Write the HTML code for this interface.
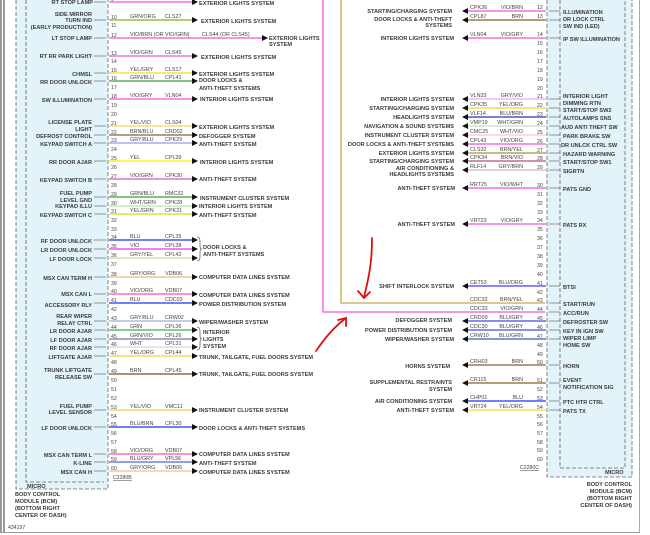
<!DOCTYPE html>
<html><head><meta charset="utf-8"><style>
html,body{margin:0;padding:0;background:#fff;width:650px;height:535px;overflow:hidden}
svg{display:block}
text{font-family:"Liberation Sans",sans-serif;font-size:5.6px;font-weight:bold;fill:#3a3a3a}
.e{text-anchor:end}
.n{font-size:5.2px;font-weight:normal;fill:#444}
.c{font-size:5.4px;font-weight:normal;fill:#444}
</style></head><body>
<svg width="650" height="535" viewBox="0 0 650 535" xmlns="http://www.w3.org/2000/svg">
<!-- borders -->
<line x1="1" y1="0" x2="1" y2="533" stroke="#333" stroke-width="1"/>
<line x1="4" y1="0" x2="4" y2="533" stroke="#333" stroke-width="1"/>
<line x1="1" y1="532.5" x2="640" y2="532.5" stroke="#999" stroke-width="1"/>
<line x1="639.5" y1="0" x2="639.5" y2="533" stroke="#aaa" stroke-width="1"/>
<!-- left module -->
<rect x="16" y="0" width="92" height="489" fill="#e3f3fa"/>
<path d="M16 0V489H108V0" fill="none" stroke="#666" stroke-width="0.8" stroke-dasharray="4,2"/>
<path d="M26 0V482H104" fill="none" stroke="#666" stroke-width="0.8" stroke-dasharray="4,2"/>
<text x="27" y="488">MICRO</text>
<text x="15" y="496">BODY CONTROL</text>
<text x="15" y="503">MODULE (BCM)</text>
<text x="15" y="510">(BOTTOM RIGHT</text>
<text x="15" y="517">CENTER OF DASH)</text>
<text x="8" y="529" class="n">434197</text>
<!-- right module -->
<rect x="547" y="0" width="85" height="477" fill="#e3f3fa"/>
<path d="M547 0V477H632V0" fill="none" stroke="#666" stroke-width="0.8" stroke-dasharray="4,2"/>
<path d="M560 0V468H625V0" fill="none" stroke="#666" stroke-width="0.8" stroke-dasharray="4,2"/>
<text x="605" y="474">MICRO</text>
<text x="632" y="486" class="e">BODY CONTROL</text>
<text x="632" y="493" class="e">MODULE (BCM)</text>
<text x="632" y="500" class="e">(BOTTOM RIGHT</text>
<text x="632" y="507" class="e">CENTER OF DASH)</text>
<!-- loop lines -->
<path d="M323 0V312H545" fill="none" stroke="#f050e0" stroke-width="1.3"/>
<path d="M341 0V303H545" fill="none" stroke="#c8a850" stroke-width="1.3"/>
<!-- red arrows -->
<g stroke="#e01010" stroke-width="1.8" fill="none" stroke-linecap="round">
<path d="M372 238C372 255 371 270 364 297"/><path d="M358 291L364 298L370 292"/>
<path d="M316 351C325 338 333 328 346 318"/><path d="M338 320L346 318L346 326"/>
</g>
<!-- left pin numbers -->
<g class="n">
<text x="111" y="1" class="n">9</text><text x="111" y="19" class="n">10</text><text x="111" y="27" class="n">11</text><text x="111" y="37" class="n">12</text><text x="111" y="55" class="n">13</text><text x="111" y="63" class="n">14</text><text x="111" y="72" class="n">15</text><text x="111" y="80" class="n">16</text><text x="111" y="89" class="n">17</text><text x="111" y="98" class="n">18</text><text x="111" y="107" class="n">19</text><text x="111" y="116" class="n">20</text><text x="111" y="125" class="n">21</text><text x="111" y="134" class="n">22</text><text x="111" y="142" class="n">23</text><text x="111" y="151" class="n">24</text><text x="111" y="160" class="n">25</text><text x="111" y="169" class="n">26</text><text x="111" y="178" class="n">27</text><text x="111" y="187" class="n">28</text><text x="111" y="196" class="n">29</text><text x="111" y="205" class="n">30</text><text x="111" y="213" class="n">31</text><text x="111" y="222" class="n">32</text><text x="111" y="231" class="n">33</text><text x="111" y="239" class="n">34</text><text x="111" y="248" class="n">35</text><text x="111" y="257" class="n">36</text><text x="111" y="266" class="n">37</text><text x="111" y="276" class="n">38</text><text x="111" y="285" class="n">39</text><text x="111" y="293" class="n">40</text><text x="111" y="302" class="n">41</text><text x="111" y="311" class="n">42</text><text x="111" y="320" class="n">43</text><text x="111" y="329" class="n">44</text><text x="111" y="338" class="n">45</text><text x="111" y="346" class="n">46</text><text x="111" y="355" class="n">47</text><text x="111" y="364" class="n">48</text><text x="111" y="373" class="n">49</text><text x="111" y="382" class="n">50</text><text x="111" y="391" class="n">51</text><text x="111" y="400" class="n">52</text><text x="111" y="409" class="n">53</text><text x="111" y="418" class="n">54</text><text x="111" y="426" class="n">55</text><text x="111" y="435" class="n">56</text><text x="111" y="444" class="n">57</text><text x="111" y="453" class="n">58</text><text x="111" y="461" class="n">59</text><text x="111" y="470" class="n">60</text>
</g>
<text x="113" y="479" class="n" text-decoration="underline">C2280B</text>
<!-- left wires -->
<g stroke-width="1.3">
<line x1="109" y1="2" x2="193" y2="2" stroke="#f050e0"/>
<line x1="109" y1="20" x2="193" y2="20" stroke="#78b020"/>
<line x1="109" y1="38" x2="263" y2="38" stroke="#f050e0"/>
<line x1="109" y1="56" x2="193" y2="56" stroke="#f050e0"/>
<line x1="109" y1="73" x2="193" y2="73" stroke="#e8e020"/>
<line x1="109" y1="81" x2="193" y2="81" stroke="#3a9a40"/>
<line x1="109" y1="99" x2="193" y2="99" stroke="#f050e0"/>
<line x1="109" y1="126" x2="193" y2="126" stroke="#f5d060"/>
<line x1="109" y1="135" x2="193" y2="135" stroke="#806050"/>
<line x1="109" y1="143" x2="193" y2="143" stroke="#9a9ae8"/>
<line x1="109" y1="161" x2="193" y2="161" stroke="#f0f000"/>
<line x1="109" y1="179" x2="193" y2="179" stroke="#e050d0"/>
<line x1="109" y1="197" x2="193" y2="197" stroke="#3a9a40"/>
<line x1="109" y1="206" x2="193" y2="206" stroke="#c0e0a0"/>
<line x1="109" y1="214" x2="193" y2="214" stroke="#d0e010"/>
<line x1="109" y1="240" x2="193" y2="240" stroke="#2030f0"/>
<line x1="109" y1="249" x2="193" y2="249" stroke="#f030e0"/>
<line x1="109" y1="258" x2="193" y2="258" stroke="#d8d0a8"/>
<line x1="109" y1="277" x2="193" y2="277" stroke="#e8b888"/>
<line x1="109" y1="294" x2="193" y2="294" stroke="#f050c0"/>
<line x1="109" y1="303" x2="193" y2="303" stroke="#2030f0"/>
<line x1="109" y1="321" x2="193" y2="321" stroke="#a8a8e8"/>
<line x1="109" y1="330" x2="193" y2="330" stroke="#40b040"/>
<line x1="109" y1="339" x2="193" y2="339" stroke="#8a6aa0"/>
<line x1="109" y1="347" x2="193" y2="347" stroke="#d8d8d8"/>
<line x1="109" y1="356" x2="193" y2="356" stroke="#f0d830"/>
<line x1="109" y1="374" x2="193" y2="374" stroke="#7a5020"/>
<line x1="109" y1="410" x2="193" y2="410" stroke="#f5c850"/>
<line x1="109" y1="427" x2="193" y2="427" stroke="#2030e0"/>
<line x1="109" y1="454" x2="193" y2="454" stroke="#f050c0"/>
<line x1="109" y1="462" x2="193" y2="462" stroke="#5060f0"/>
<line x1="109" y1="471" x2="193" y2="471" stroke="#e8c0a0"/>
</g>
<!-- left arrows -->
<g fill="#111">
<path d="M192 -1L198 2L192 5Z"/><path d="M192 17L198 20L192 23Z"/><path d="M262 35L268 38L262 41Z"/><path d="M192 53L198 56L192 59Z"/><path d="M192 70L198 73L192 76Z"/><path d="M192 78L198 81L192 84Z"/><path d="M192 96L198 99L192 102Z"/><path d="M192 123L198 126L192 129Z"/><path d="M192 132L198 135L192 138Z"/><path d="M192 140L198 143L192 146Z"/><path d="M192 158L198 161L192 164Z"/><path d="M192 176L198 179L192 182Z"/><path d="M192 194L198 197L192 200Z"/><path d="M192 203L198 206L192 209Z"/><path d="M192 211L198 214L192 217Z"/><path d="M192 237L198 240L192 243Z"/><path d="M192 246L198 249L192 252Z"/><path d="M192 255L198 258L192 261Z"/><path d="M192 274L198 277L192 280Z"/><path d="M192 291L198 294L192 297Z"/><path d="M192 300L198 303L192 306Z"/><path d="M192 318L198 321L192 324Z"/><path d="M192 327L198 330L192 333Z"/><path d="M192 336L198 339L192 342Z"/><path d="M192 344L198 347L192 350Z"/><path d="M192 353L198 356L192 359Z"/><path d="M192 371L198 374L192 377Z"/><path d="M192 407L198 410L192 413Z"/><path d="M192 424L198 427L192 430Z"/><path d="M192 451L198 454L192 457Z"/><path d="M192 459L198 462L192 465Z"/><path d="M192 468L198 471L192 474Z"/>
</g>
<path d="M197 237Q200 237 200 241V246Q200 249 202 249Q200 249 200 252V257Q200 261 197 261" fill="none" stroke="#333" stroke-width="0.6"/>
<path d="M197 327Q200 327 200 331V336Q200 339 202 339Q200 339 200 342V346Q200 350 197 350" fill="none" stroke="#333" stroke-width="0.6"/>
<!-- left wire labels -->
<g class="c">
<text x="130" y="0" class="c">VIO/BRN</text><text x="165" y="0" class="c">CLS45</text>
<text x="130" y="18" class="c">GRN/ORG</text><text x="165" y="18" class="c">CLS27</text>
<text x="130" y="36" class="c">VIO/BRN (OR VIO/GRN)</text><text x="202" y="36" class="c">CLS44 (OR CLS45)</text>
<text x="130" y="54" class="c">VIO/GRN</text><text x="165" y="54" class="c">CLS45</text>
<text x="130" y="71" class="c">YEL/GRY</text><text x="165" y="71" class="c">CLS17</text>
<text x="130" y="79" class="c">GRN/BLU</text><text x="165" y="79" class="c">CPL41</text>
<text x="130" y="97" class="c">VIO/GRY</text><text x="165" y="97" class="c">VLN04</text>
<text x="130" y="124" class="c">YEL/VIO</text><text x="165" y="124" class="c">CLS04</text>
<text x="130" y="133" class="c">BRN/BLU</text><text x="165" y="133" class="c">CRD02</text>
<text x="130" y="141" class="c">GRY/BLU</text><text x="165" y="141" class="c">CPK29</text>
<text x="130" y="159" class="c">YEL</text><text x="165" y="159" class="c">CPL39</text>
<text x="130" y="177" class="c">VIO/GRN</text><text x="165" y="177" class="c">CPK30</text>
<text x="130" y="195" class="c">GRN/BLU</text><text x="165" y="195" class="c">RMC32</text>
<text x="130" y="204" class="c">WHT/GRN</text><text x="165" y="204" class="c">CPK28</text>
<text x="130" y="212" class="c">YEL/GRN</text><text x="165" y="212" class="c">CPK31</text>
<text x="130" y="238" class="c">BLU</text><text x="165" y="238" class="c">CPL35</text>
<text x="130" y="247" class="c">VIO</text><text x="165" y="247" class="c">CPL38</text>
<text x="130" y="256" class="c">GRY/YEL</text><text x="165" y="256" class="c">CPL42</text>
<text x="130" y="275" class="c">GRY/ORG</text><text x="165" y="275" class="c">VDB06</text>
<text x="130" y="292" class="c">VIO/ORG</text><text x="165" y="292" class="c">VDB07</text>
<text x="130" y="301" class="c">BLU</text><text x="165" y="301" class="c">CDC03</text>
<text x="130" y="319" class="c">GRY/BLU</text><text x="165" y="319" class="c">CRW02</text>
<text x="130" y="328" class="c">GRN</text><text x="165" y="328" class="c">CPL36</text>
<text x="130" y="337" class="c">GRN/VIO</text><text x="165" y="337" class="c">CPL26</text>
<text x="130" y="345" class="c">WHT</text><text x="165" y="345" class="c">CPL31</text>
<text x="130" y="354" class="c">YEL/ORG</text><text x="165" y="354" class="c">CPL44</text>
<text x="130" y="372" class="c">BRN</text><text x="165" y="372" class="c">CPL45</text>
<text x="130" y="408" class="c">YEL/VIO</text><text x="165" y="408" class="c">VMC11</text>
<text x="130" y="425" class="c">BLU/BRN</text><text x="165" y="425" class="c">CPL30</text>
<text x="130" y="452" class="c">VIO/ORG</text><text x="165" y="452" class="c">VDB07</text>
<text x="130" y="460" class="c">BLU/GRY</text><text x="165" y="460" class="c">VPL56</text>
<text x="130" y="469" class="c">GRY/ORG</text><text x="165" y="469" class="c">VDB06</text>
</g>
<!-- left destinations -->
<g>
<text x="199" y="5">EXTERIOR LIGHTS SYSTEM</text>
<text x="201" y="23">EXTERIOR LIGHTS SYSTEM</text>
<text x="269" y="40">EXTERIOR LIGHTS</text><text x="269" y="46">SYSTEM</text>
<text x="201" y="59">EXTERIOR LIGHTS SYSTEM</text>
<text x="199" y="76">EXTERIOR LIGHTS SYSTEM</text>
<text x="199" y="82">DOOR LOCKS &amp;</text><text x="199" y="90">ANTI-THEFT SYSTEMS</text>
<text x="200" y="101">INTERIOR LIGHTS SYSTEM</text>
<text x="199" y="129">EXTERIOR LIGHTS SYSTEM</text>
<text x="199" y="138">DEFOGGER SYSTEM</text>
<text x="199" y="146">ANTI-THEFT SYSTEM</text>
<text x="200" y="164">INTERIOR LIGHTS SYSTEM</text>
<text x="199" y="181">ANTI-THEFT SYSTEM</text>
<text x="200" y="200">INSTRUMENT CLUSTER SYSTEM</text>
<text x="199" y="208">INTERIOR LIGHTS SYSTEM</text>
<text x="199" y="217">ANTI-THEFT SYSTEM</text>
<text x="203" y="249">DOOR LOCKS &amp;</text><text x="203" y="256">ANTI-THEFT SYSTEMS</text>
<text x="199" y="279">COMPUTER DATA LINES SYSTEM</text>
<text x="199" y="297">COMPUTER DATA LINES SYSTEM</text>
<text x="199" y="306">POWER DISTRIBUTION SYSTEM</text>
<text x="199" y="324">WIPER/WASHER SYSTEM</text>
<text x="203" y="334">INTERIOR</text><text x="203" y="341">LIGHTS</text><text x="203" y="348">SYSTEM</text>
<text x="199" y="359">TRUNK, TAILGATE, FUEL DOORS SYSTEM</text>
<text x="199" y="376">TRUNK, TAILGATE, FUEL DOORS SYSTEM</text>
<text x="199" y="412">INSTRUMENT CLUSTER SYSTEM</text>
<text x="199" y="430">DOOR LOCKS &amp; ANTI-THEFT SYSTEMS</text>
<text x="199" y="456">COMPUTER DATA LINES SYSTEM</text>
<text x="199" y="465">ANTI-THEFT SYSTEM</text>
<text x="199" y="474">COMPUTER DATA LINES SYSTEM</text>
</g>
<!-- left module labels + stubs -->
<g stroke="#555" stroke-width="0.6">
<line x1="94" y1="2" x2="106" y2="2"/><line x1="94" y1="20" x2="106" y2="20"/><line x1="94" y1="38" x2="106" y2="38"/><line x1="94" y1="56" x2="106" y2="56"/><line x1="94" y1="73" x2="106" y2="73"/><line x1="94" y1="81" x2="106" y2="81"/><line x1="94" y1="99" x2="106" y2="99"/><line x1="94" y1="126" x2="106" y2="126"/><line x1="94" y1="135" x2="106" y2="135"/><line x1="94" y1="143" x2="106" y2="143"/><line x1="94" y1="161" x2="106" y2="161"/><line x1="94" y1="179" x2="106" y2="179"/><line x1="94" y1="197" x2="106" y2="197"/><line x1="94" y1="206" x2="106" y2="206"/><line x1="94" y1="214" x2="106" y2="214"/><line x1="94" y1="240" x2="106" y2="240"/><line x1="94" y1="249" x2="106" y2="249"/><line x1="94" y1="258" x2="106" y2="258"/><line x1="94" y1="277" x2="106" y2="277"/><line x1="94" y1="294" x2="106" y2="294"/><line x1="94" y1="303" x2="106" y2="303"/><line x1="94" y1="321" x2="106" y2="321"/><line x1="94" y1="330" x2="106" y2="330"/><line x1="94" y1="339" x2="106" y2="339"/><line x1="94" y1="347" x2="106" y2="347"/><line x1="94" y1="356" x2="106" y2="356"/><line x1="94" y1="374" x2="106" y2="374"/><line x1="94" y1="410" x2="106" y2="410"/><line x1="94" y1="427" x2="106" y2="427"/><line x1="94" y1="454" x2="106" y2="454"/><line x1="94" y1="462" x2="106" y2="462"/><line x1="94" y1="471" x2="106" y2="471"/>
</g>
<g>
<text x="93" y="4" class="e">RT STOP LAMP</text>
<text x="92" y="16" class="e">SIDE MIRROR</text><text x="92" y="22" class="e">TURN IND</text><text x="92" y="29" class="e">(EARLY PRODUCTION)</text>
<text x="92" y="40" class="e">LT STOP LAMP</text>
<text x="92" y="58" class="e">RT RR PARK LIGHT</text>
<text x="92" y="76" class="e">CHMSL</text>
<text x="92" y="84" class="e">RR DOOR UNLOCK</text>
<text x="92" y="102" class="e">SW ILLUMINATION</text>
<text x="92" y="124" class="e">LICENSE PLATE</text><text x="92" y="131" class="e">LIGHT</text>
<text x="92" y="138" class="e">DEFROST CONTROL</text>
<text x="92" y="146" class="e">KEYPAD SWITCH A</text>
<text x="92" y="164" class="e">RR DOOR AJAR</text>
<text x="92" y="182" class="e">KEYPAD SWITCH B</text>
<text x="92" y="195" class="e">FUEL PUMP</text><text x="92" y="202" class="e">LEVEL GND</text>
<text x="92" y="208" class="e">KEYPAD ILLU</text>
<text x="92" y="217" class="e">KEYPAD SWITCH C</text>
<text x="92" y="243" class="e">RF DOOR UNLOCK</text>
<text x="92" y="252" class="e">LR DOOR UNLOCK</text>
<text x="92" y="261" class="e">LF DOOR LOCK</text>
<text x="92" y="280" class="e">MSX CAN TERM H</text>
<text x="92" y="296" class="e">MSX CAN L</text>
<text x="92" y="307" class="e">ACCESSORY RLY</text>
<text x="92" y="318" class="e">REAR WIPER</text><text x="92" y="325" class="e">RELAY CTRL</text>
<text x="92" y="333" class="e">LR DOOR AJAR</text>
<text x="92" y="342" class="e">LF DOOR AJAR</text>
<text x="92" y="350" class="e">RF DOOR AJAR</text>
<text x="92" y="359" class="e">LIFTGATE AJAR</text>
<text x="92" y="372" class="e">TRUNK LIFTGATE</text><text x="92" y="379" class="e">RELEASE SW</text>
<text x="92" y="408" class="e">FUEL PUMP</text><text x="92" y="414" class="e">LEVEL SENSOR</text>
<text x="92" y="430" class="e">LF DOOR UNLOCK</text>
<text x="92" y="457" class="e">MSX CAN TERM L</text>
<text x="92" y="465" class="e">K-LINE</text>
<text x="92" y="474" class="e">MSX CAN H</text>
</g>
<!-- right pin numbers -->
<g>
<text x="537" y="9" class="n">12</text><text x="537" y="18" class="n">13</text><text x="537" y="36" class="n">14</text><text x="537" y="45" class="n">15</text><text x="537" y="54" class="n">16</text><text x="537" y="63" class="n">17</text><text x="537" y="72" class="n">18</text><text x="537" y="81" class="n">19</text><text x="537" y="90" class="n">20</text><text x="537" y="98" class="n">21</text><text x="537" y="107" class="n">22</text><text x="537" y="116" class="n">23</text><text x="537" y="125" class="n">24</text><text x="537" y="134" class="n">25</text><text x="537" y="143" class="n">26</text><text x="537" y="152" class="n">27</text><text x="537" y="160" class="n">28</text><text x="537" y="169" class="n">29</text><text x="537" y="187" class="n">30</text><text x="537" y="196" class="n">31</text><text x="537" y="205" class="n">32</text><text x="537" y="214" class="n">33</text><text x="537" y="222" class="n">34</text><text x="537" y="231" class="n">35</text><text x="537" y="240" class="n">36</text><text x="537" y="249" class="n">37</text><text x="537" y="258" class="n">38</text><text x="537" y="267" class="n">39</text><text x="537" y="276" class="n">40</text><text x="537" y="285" class="n">41</text><text x="537" y="294" class="n">42</text><text x="537" y="302" class="n">43</text><text x="537" y="311" class="n">44</text><text x="537" y="320" class="n">45</text><text x="537" y="329" class="n">46</text><text x="537" y="338" class="n">47</text><text x="537" y="347" class="n">48</text><text x="537" y="356" class="n">49</text><text x="537" y="364" class="n">50</text><text x="537" y="382" class="n">51</text><text x="537" y="391" class="n">52</text><text x="537" y="400" class="n">53</text><text x="537" y="409" class="n">54</text><text x="537" y="418" class="n">55</text><text x="537" y="426" class="n">56</text><text x="537" y="435" class="n">57</text><text x="537" y="444" class="n">58</text><text x="537" y="452" class="n">59</text><text x="537" y="461" class="n">60</text>
</g>
<text x="520" y="469" class="n" text-decoration="underline">C2280C</text>
<!-- right wires -->
<g stroke-width="1.3">
<line x1="467" y1="11" x2="546" y2="11" stroke="#f050e0"/>
<line x1="467" y1="20" x2="546" y2="20" stroke="#8a6020"/>
<line x1="467" y1="38" x2="546" y2="38" stroke="#f050e0"/>
<line x1="467" y1="99" x2="546" y2="99" stroke="#f0a8f0"/>
<line x1="467" y1="108" x2="546" y2="108" stroke="#f0d820"/>
<line x1="467" y1="117" x2="546" y2="117" stroke="#3030c0"/>
<line x1="467" y1="126" x2="546" y2="126" stroke="#c8e0b8"/>
<line x1="467" y1="135" x2="546" y2="135" stroke="#f8c0f0"/>
<line x1="467" y1="144" x2="546" y2="144" stroke="#f050e0"/>
<line x1="467" y1="153" x2="546" y2="153" stroke="#a89040"/>
<line x1="467" y1="161" x2="546" y2="161" stroke="#b05070"/>
<line x1="467" y1="170" x2="546" y2="170" stroke="#c8c0a8"/>
<line x1="467" y1="188" x2="546" y2="188" stroke="#f050e0"/>
<line x1="467" y1="224" x2="546" y2="224" stroke="#f050e0"/>
<line x1="467" y1="286" x2="546" y2="286" stroke="#4040e8"/>
<line x1="467" y1="321" x2="546" y2="321" stroke="#4848e8"/>
<line x1="467" y1="330" x2="546" y2="330" stroke="#4848e8"/>
<line x1="467" y1="339" x2="546" y2="339" stroke="#3060b0"/>
<line x1="467" y1="365" x2="546" y2="365" stroke="#8a6020"/>
<line x1="467" y1="383" x2="546" y2="383" stroke="#8a6020"/>
<line x1="467" y1="401" x2="546" y2="401" stroke="#2030f0"/>
<line x1="467" y1="410" x2="546" y2="410" stroke="#f0e020"/>
</g>
<g fill="#111">
<path d="M468 8L462 11L468 14Z"/><path d="M468 17L462 20L468 23Z"/><path d="M468 35L462 38L468 41Z"/><path d="M468 96L462 99L468 102Z"/><path d="M468 105L462 108L468 111Z"/><path d="M468 114L462 117L468 120Z"/><path d="M468 123L462 126L468 129Z"/><path d="M468 132L462 135L468 138Z"/><path d="M468 141L462 144L468 147Z"/><path d="M468 150L462 153L468 156Z"/><path d="M468 158L462 161L468 164Z"/><path d="M468 167L462 170L468 173Z"/><path d="M468 185L462 188L468 191Z"/><path d="M468 221L462 224L468 227Z"/><path d="M468 283L462 286L468 289Z"/><path d="M468 318L462 321L468 324Z"/><path d="M468 327L462 330L468 333Z"/><path d="M468 336L462 339L468 342Z"/><path d="M468 362L462 365L468 368Z"/><path d="M468 380L462 383L468 386Z"/><path d="M468 398L462 401L468 404Z"/><path d="M468 407L462 410L468 413Z"/>
</g>
<g>
<text x="470" y="9" class="c">CPK36</text><text x="523" y="9" class="c e">VIO/BRN</text>
<text x="470" y="18" class="c">CPL87</text><text x="523" y="18" class="c e">BRN</text>
<text x="470" y="36" class="c">VLN04</text><text x="523" y="36" class="c e">VIO/GRY</text>
<text x="470" y="97" class="c">VLN33</text><text x="523" y="97" class="c e">GRY/VIO</text>
<text x="470" y="106" class="c">CPK35</text><text x="523" y="106" class="c e">YEL/ORG</text>
<text x="470" y="115" class="c">VLF14</text><text x="523" y="115" class="c e">BLU/BRN</text>
<text x="470" y="124" class="c">VMP19</text><text x="523" y="124" class="c e">WHT/GRN</text>
<text x="470" y="133" class="c">CMC25</text><text x="523" y="133" class="c e">WHT/VIO</text>
<text x="470" y="142" class="c">CPL43</text><text x="523" y="142" class="c e">VIO/ORG</text>
<text x="470" y="151" class="c">CLS32</text><text x="523" y="151" class="c e">BRN/YEL</text>
<text x="470" y="159" class="c">CPK34</text><text x="523" y="159" class="c e">BRN/VIO</text>
<text x="470" y="168" class="c">RLF14</text><text x="523" y="168" class="c e">GRY/BRN</text>
<text x="470" y="186" class="c">RRT25</text><text x="523" y="186" class="c e">VIO/WHT</text>
<text x="470" y="222" class="c">VRT23</text><text x="523" y="222" class="c e">VIO/GRY</text>
<text x="470" y="284" class="c">CET53</text><text x="523" y="284" class="c e">BLU/ORG</text>
<text x="470" y="301" class="c">CDC32</text><text x="523" y="301" class="c e">BRN/YEL</text>
<text x="470" y="310" class="c">CDC33</text><text x="523" y="310" class="c e">VIO/GRN</text>
<text x="470" y="319" class="c">CRD09</text><text x="523" y="319" class="c e">BLU/GRY</text>
<text x="470" y="328" class="c">CDC30</text><text x="523" y="328" class="c e">BLU/GRY</text>
<text x="470" y="337" class="c">CRW10</text><text x="523" y="337" class="c e">BLU/GRN</text>
<text x="470" y="363" class="c">CRH03</text><text x="523" y="363" class="c e">BRN</text>
<text x="470" y="381" class="c">CR115</text><text x="523" y="381" class="c e">BRN</text>
<text x="470" y="399" class="c">CHP01</text><text x="523" y="399" class="c e">BLU</text>
<text x="470" y="408" class="c">VRT24</text><text x="523" y="408" class="c e">YEL/ORG</text>
</g>
<g>
<text x="452" y="13" class="e">STARTING/CHARGING SYSTEM</text>
<text x="452" y="21" class="e">DOOR LOCKS &amp; ANTI-THEFT</text><text x="452" y="27" class="e">SYSTEMS</text>
<text x="454" y="40" class="e">INTERIOR LIGHTS SYSTEM</text>
<text x="454" y="101" class="e">INTERIOR LIGHTS SYSTEM</text>
<text x="454" y="110" class="e">STARTING/CHARGING SYSTEM</text>
<text x="454" y="119" class="e">HEADLIGHTS SYSTEM</text>
<text x="454" y="128" class="e">NAVIGATION &amp; SOUND SYSTEMS</text>
<text x="454" y="137" class="e">INSTRUMENT CLUSTER SYSTEM</text>
<text x="454" y="146" class="e">DOOR LOCKS &amp; ANTI-THEFT SYSTEMS</text>
<text x="454" y="155" class="e">EXTERIOR LIGHTS SYSTEM</text>
<text x="454" y="163" class="e">STARTING/CHARGING SYSTEM</text>
<text x="454" y="170" class="e">AIR CONDITIONING &amp;</text><text x="454" y="176" class="e">HEADLIGHTS SYSTEMS</text>
<text x="455" y="190" class="e">ANTI-THEFT SYSTEM</text>
<text x="455" y="226" class="e">ANTI-THEFT SYSTEM</text>
<text x="454" y="288" class="e">SHIFT INTERLOCK SYSTEM</text>
<text x="452" y="322" class="e">DEFOGGER SYSTEM</text>
<text x="452" y="332" class="e">POWER DISTRIBUTION SYSTEM</text>
<text x="454" y="341" class="e">WIPER/WASHER SYSTEM</text>
<text x="450" y="368" class="e">HORNS SYSTEM</text>
<text x="452" y="384" class="e">SUPPLEMENTAL RESTRAINTS</text><text x="452" y="391" class="e">SYSTEM</text>
<text x="452" y="403" class="e">AIR CONDITIONING SYSTEM</text>
<text x="454" y="412" class="e">ANTI-THEFT SYSTEM</text>
</g>
<g stroke="#555" stroke-width="0.6">
<line x1="549" y1="11" x2="560" y2="11"/><line x1="549" y1="20" x2="560" y2="20"/><line x1="549" y1="38" x2="560" y2="38"/><line x1="549" y1="99" x2="560" y2="99"/><line x1="549" y1="108" x2="560" y2="108"/><line x1="549" y1="117" x2="560" y2="117"/><line x1="549" y1="126" x2="560" y2="126"/><line x1="549" y1="135" x2="560" y2="135"/><line x1="549" y1="144" x2="560" y2="144"/><line x1="549" y1="153" x2="560" y2="153"/><line x1="549" y1="161" x2="560" y2="161"/><line x1="549" y1="170" x2="560" y2="170"/><line x1="549" y1="188" x2="560" y2="188"/><line x1="549" y1="224" x2="560" y2="224"/><line x1="549" y1="286" x2="560" y2="286"/><line x1="549" y1="303" x2="560" y2="303"/><line x1="549" y1="312" x2="560" y2="312"/><line x1="549" y1="321" x2="560" y2="321"/><line x1="549" y1="330" x2="560" y2="330"/><line x1="549" y1="339" x2="560" y2="339"/><line x1="549" y1="365" x2="560" y2="365"/><line x1="549" y1="383" x2="560" y2="383"/><line x1="549" y1="401" x2="560" y2="401"/><line x1="549" y1="410" x2="560" y2="410"/>
</g>
<g>
<text x="563" y="14">ILLUMINATION</text>
<text x="563" y="21">DR LOCK CTRL</text><text x="563" y="28">SW IND (LED)</text>
<text x="563" y="41">IP SW ILLUMINATION</text>
<text x="563" y="98">INTERIOR LIGHT</text><text x="563" y="105">DIMMING RTN</text>
<text x="563" y="112">START/STOP SW2</text>
<text x="563" y="120">AUTOLAMPS SNS</text>
<text x="561" y="129">AUD ANTI THEFT SW</text>
<text x="563" y="138">PARK BRAKE SW</text>
<text x="561" y="147">DR UNLCK CTRL SW</text>
<text x="563" y="156">HAZARD WARNING</text>
<text x="563" y="164">START/STOP SW1</text>
<text x="563" y="173">SIGRTN</text>
<text x="563" y="191">PATS GND</text>
<text x="563" y="227">PATS RX</text>
<text x="563" y="289">BTSI</text>
<text x="563" y="306">START/RUN</text>
<text x="563" y="315">ACC/RUN</text>
<text x="563" y="324">DEFROSTER SW</text>
<text x="563" y="333">KEY IN IGN SW</text>
<text x="563" y="340">WIPER LIMP</text><text x="563" y="347">HOME SW</text>
<text x="563" y="368">HORN</text>
<text x="563" y="382">EVENT</text><text x="563" y="389">NOTIFICATION SIG</text>
<text x="563" y="404">PTC HTR CTRL</text>
<text x="563" y="413">PATS TX</text>
</g>
</svg>
</body></html>
